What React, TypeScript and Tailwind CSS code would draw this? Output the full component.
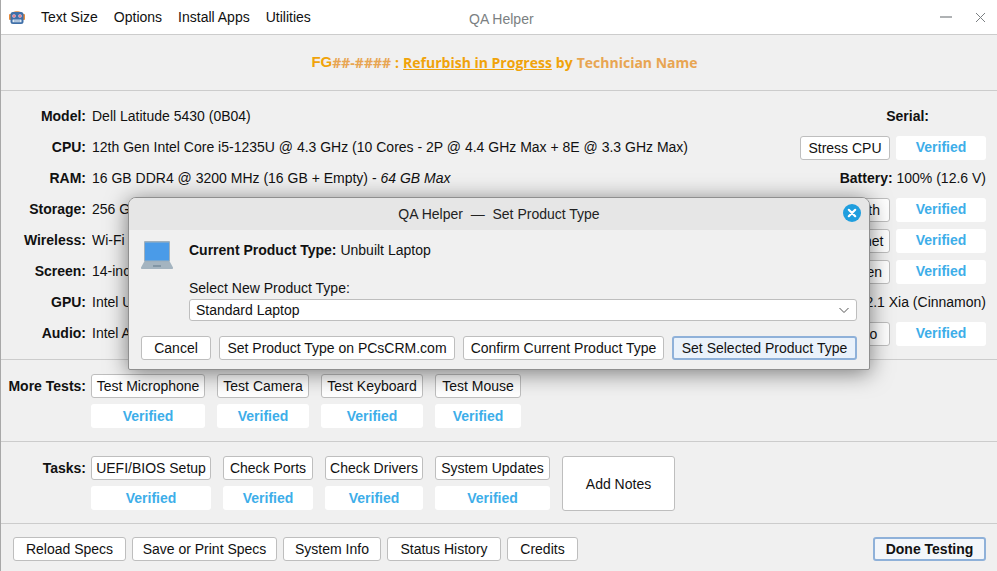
import React from 'react';

const Btn: React.FC<{ label: string; className?: string }> = ({ label, className = '' }) => (
  <button className={`h-6 shrink-0 rounded-[3px] border border-[#bebebe] bg-white text-center text-[14px] leading-none text-[#111] ${className}`}>
    {label}
  </button>
);

const Verified: React.FC<{ className?: string }> = ({ className = '' }) => (
  <div className={`flex h-6 shrink-0 items-center justify-center rounded-[3px] bg-white text-[14px] font-bold text-[#3daee9] ${className}`}>
    Verified
  </div>
);

const Row: React.FC<{ label: string; children: React.ReactNode; right?: React.ReactNode }> = ({ label, children, right }) => (
  <div className="flex h-[31px] items-center">
    <div className="w-[85px] shrink-0 text-right font-bold text-[#111]">{label}</div>
    <div className="ml-[6px] min-w-0 flex-1 truncate text-[#111]">{children}</div>
    {right}
  </div>
);

const TestPair: React.FC<{ label: string }> = ({ label }) => (
  <div className="flex shrink-0 items-center gap-[6px] pl-4">
    <Btn label={label} className="w-[90px]" />
    <Verified className="w-[90px]" />
  </div>
);

const RobotIcon = () => (
  <svg width="18" height="18" viewBox="0 0 18 18" className="shrink-0">
    <path d="M3 7 C3 2 15 2 15 7Z" fill="#e58a3c" />
    <rect x="1" y="6" width="2.5" height="6" rx="1" fill="#e58a3c" />
    <rect x="14.5" y="6" width="2.5" height="6" rx="1" fill="#e58a3c" />
    <rect x="2.5" y="4" width="13" height="12" rx="2.5" fill="#3f6fa8" />
    <circle cx="6" cy="8" r="1.8" fill="#f3c6d0" />
    <circle cx="12" cy="8" r="1.8" fill="#f3c6d0" />
    <circle cx="6" cy="8" r="0.8" fill="#d9334a" />
    <circle cx="12" cy="8" r="0.8" fill="#d9334a" />
    <rect x="4.5" y="11.5" width="9" height="2.8" rx="0.5" fill="#dfe9f3" />
    <path d="M7 11.5v2.8M9 11.5v2.8M11 11.5v2.8" stroke="#3f6fa8" strokeWidth="0.6" />
  </svg>
);

const LaptopIcon = () => (
  <svg width="32" height="28" viewBox="0 0 32 28" className="shrink-0">
    <rect x="3" y="0" width="26" height="21" rx="1" fill="#9fb0bd" />
    <rect x="4" y="1.5" width="24" height="18" fill="#4a9be8" />
    <path d="M3 21h26l3 5.5a1 1 0 0 1-1 1.5H1a1 1 0 0 1-1-1.5Z" fill="#a4b4c0" />
    <rect x="12" y="24" width="8" height="2" fill="#8296a5" />
  </svg>
);

const App: React.FC = () => {
  return (
    <div className="relative flex h-[571px] w-[997px] flex-col overflow-hidden border-l border-[#a8a8a8] bg-[#f0f0f0] font-['Liberation_Sans',Arial,sans-serif] text-[14px] text-[#111]">
      {/* title bar */}
      <div className="relative flex h-[35px] shrink-0 items-center border-b border-[#cccccc] bg-white">
        <div className="ml-[7px]"><RobotIcon /></div>
        <div className="ml-[15px] flex gap-4">
          <span>Text Size</span>
          <span>Options</span>
          <span>Install Apps</span>
          <span>Utilities</span>
        </div>
        <div className="absolute left-[468px] top-[9px] text-[#7b7f82]">QA Helper</div>
        <div className="ml-auto mr-[10px] flex items-center gap-[20px]">
          <svg width="14" height="14" viewBox="0 0 14 14"><path d="M1 7h12" stroke="#7b7f82" strokeWidth="1.2" /></svg>
          <svg width="14" height="14" viewBox="0 0 14 14"><path d="M3 3l9 9M12 3l-9 9" stroke="#7b7f82" strokeWidth="1" /></svg>
        </div>
      </div>

      {/* status header */}
      <div className="flex h-[56px] shrink-0 items-center justify-center border-b border-[#cccccc] pl-[11px] font-['Open_Sans',sans-serif] text-[14px] font-bold text-[#f0a30a]">
        <span className="font-['Liberation_Sans',sans-serif] text-[15px]">FG</span>
        <span className="text-[#e8a552]">##-####</span>
        <span className="ml-1">:</span>
        <span className="ml-1 underline">Refurbish in Progress</span>
        <span className="ml-1">by</span>
        <span className="ml-1 text-[#e8a552]">Technician Name</span>
      </div>

      {/* specs */}
      <div className="shrink-0 border-b border-[#cccccc] pb-[10px] pl-0 pr-[11px] pt-[10px]">
        <Row label="Model:" right={<span className="mr-[57px] font-bold">Serial:</span>}>Dell Latitude 5430 (0B04)</Row>
        <Row label="CPU:" right={<TestPair label="Stress CPU" />}>
          12th Gen Intel Core i5-1235U @ 4.3 GHz (10 Cores - 2P @ 4.4 GHz Max + 8E @ 3.3 GHz Max)
        </Row>
        <Row label="RAM:" right={<span><b>Battery:</b> 100% (12.6 V)</span>}>
          16 GB DDR4 @ 3200 MHz (16 GB + Empty) - <i>64 GB Max</i>
        </Row>
        <Row label="Storage:" right={<TestPair label="Test Health" />}>256 GB NVMe SSD</Row>
        <Row label="Wireless:" right={<TestPair label="Test Internet" />}>Wi-Fi 6 + Bluetooth 5.2</Row>
        <Row label="Screen:" right={<TestPair label="Test Screen" />}>14-inch 1920x1080</Row>
        <Row label="GPU:" right={<span>OS: Linux Mint 22.1 Xia (Cinnamon)</span>}>Intel UHD Graphics</Row>
        <Row label="Audio:" right={<TestPair label="Test Audio" />}>Intel Alder Lake Audio</Row>
      </div>

      {/* more tests */}
      <div className="flex h-[82px] shrink-0 border-b border-[#cccccc] pt-[14px]">
        <div className="h-6 w-[85px] shrink-0 text-right font-bold leading-6">More Tests:</div>
        <div className="ml-[5px] flex gap-3">
          {[
            ['Test Microphone', 'w-[114px]'],
            ['Test Camera', 'w-[92px]'],
            ['Test Keyboard', 'w-[102px]'],
            ['Test Mouse', 'w-[86px]'],
          ].map(([label, w]) => (
            <div key={label} className="flex flex-col gap-[6px]">
              <Btn label={label} className={w} />
              <Verified className={w} />
            </div>
          ))}
        </div>
      </div>

      {/* tasks */}
      <div className="flex h-[82px] shrink-0 border-b border-[#cccccc] pt-[14px]">
        <div className="h-6 w-[85px] shrink-0 text-right font-bold leading-6">Tasks:</div>
        <div className="ml-[5px] flex gap-3">
          {[
            ['UEFI/BIOS Setup', 'w-[120px]'],
            ['Check Ports', 'w-[90px]'],
            ['Check Drivers', 'w-[98px]'],
            ['System Updates', 'w-[115px]'],
          ].map(([label, w]) => (
            <div key={label} className="flex flex-col gap-[6px]">
              <Btn label={label} className={w} />
              <Verified className={w} />
            </div>
          ))}
          <Btn label="Add Notes" className="h-[55px] w-[113px]" />
        </div>
      </div>

      {/* bottom actions */}
      <div className="flex flex-1 items-start gap-[6px] pl-3 pr-[11px] pt-[13px]">
        <Btn label="Reload Specs" className="w-[113px]" />
        <Btn label="Save or Print Specs" className="w-[145px]" />
        <Btn label="System Info" className="w-[98px]" />
        <Btn label="Status History" className="w-[114px]" />
        <Btn label="Credits" className="w-[71px]" />
        <button className="ml-auto h-6 w-[113px] rounded-[3px] border-2 border-[#8fb1d9] bg-[#f3f6fa] font-bold">Done Testing</button>
      </div>

      {/* dialog */}
      <div className="absolute left-[127px] top-[197px] flex h-[173px] w-[742px] flex-col overflow-hidden rounded-t-[8px] rounded-b-[2px] border border-[#8f8f8f] bg-[#f0f0f0] shadow-[0_3px_22px_rgba(0,0,0,0.5)]">
        <div className="relative flex h-[32px] shrink-0 items-center justify-center bg-[#e6e6e6]">
          <span className="whitespace-pre text-[#222]">QA Helper  —  Set Product Type</span>
          <svg width="18" height="18" viewBox="0 0 18 18" className="absolute right-[8px] top-[6px]">
            <circle cx="9" cy="9" r="9" fill="#1f9ede" />
            <path d="M5.8 5.8l6.4 6.4M12.2 5.8l-6.4 6.4" stroke="#fff" strokeWidth="2.2" strokeLinecap="round" />
          </svg>
        </div>
        <div className="flex min-h-0 flex-1 flex-col px-[12px]">
          <div className="flex pt-[11px]">
            <LaptopIcon />
            <div className="ml-4 flex-1">
              <div className="leading-4 pt-[1px]"><b>Current Product Type:</b> Unbuilt Laptop</div>
              <div className="mt-[22px] leading-4">Select New Product Type:</div>
              <div className="mt-[3px] flex h-[22px] items-center justify-between rounded-[3px] border border-[#bebebe] bg-white pl-[6px] pr-[6px]">
                <span>Standard Laptop</span>
                <svg width="12" height="12" viewBox="0 0 12 12"><path d="M1.5 4l4.5 4.5L10.5 4" fill="none" stroke="#555" strokeWidth="1" /></svg>
              </div>
            </div>
          </div>
          <div className="mt-[15px] flex gap-2">
            <Btn label="Cancel" className="w-[70px]" />
            <Btn label="Set Product Type on PCsCRM.com" className="w-[236px]" />
            <Btn label="Confirm Current Product Type" className="w-[201px]" />
            <button className="h-6 w-[186px] rounded-[3px] border-2 border-[#8fb1d9] bg-[#eaf2fb] text-[#111]">Set Selected Product Type</button>
          </div>
        </div>
      </div>
    </div>
  );
};

export default App;
